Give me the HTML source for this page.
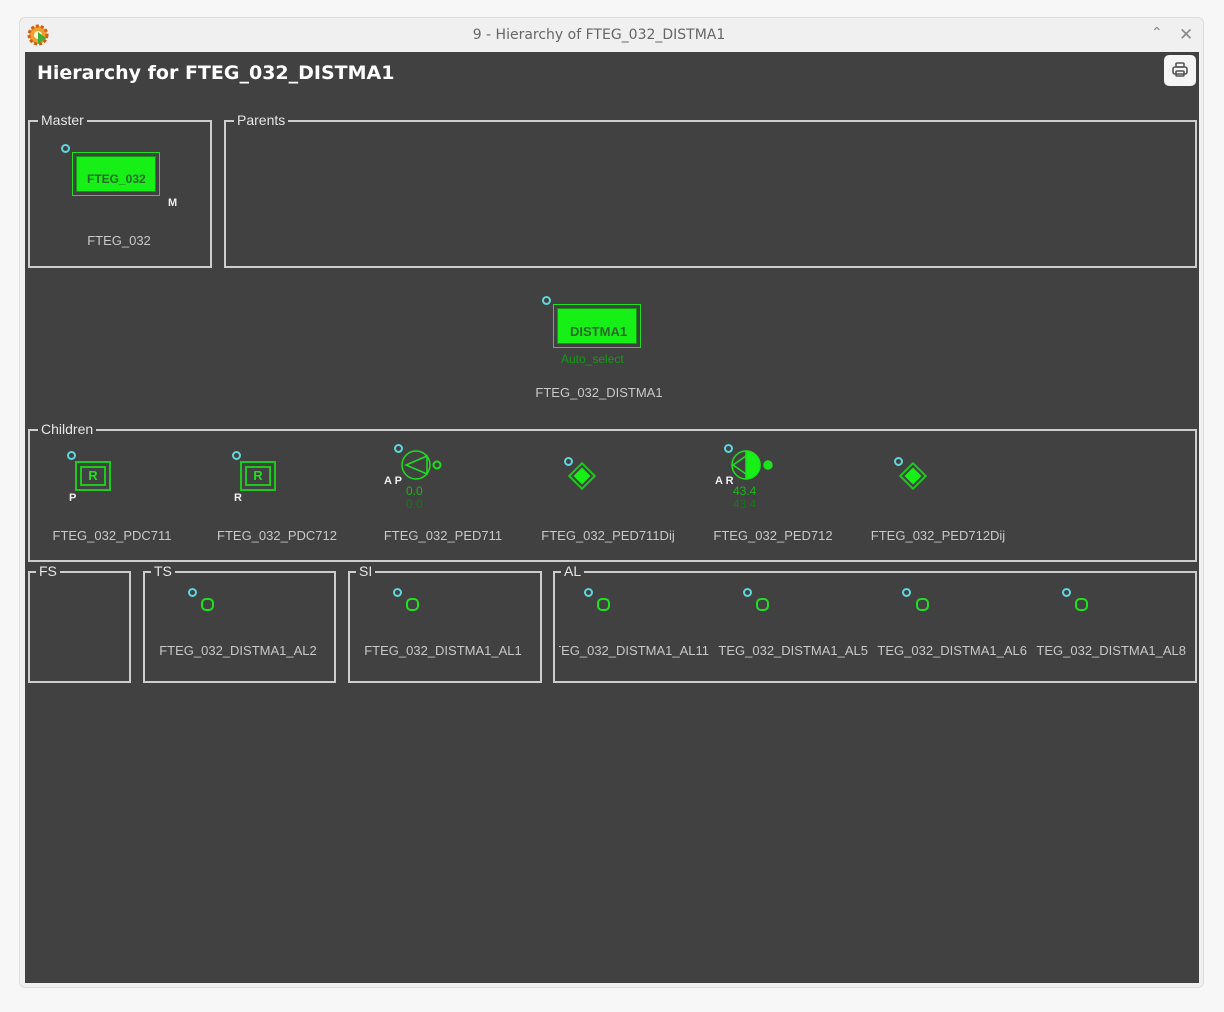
<!DOCTYPE html>
<html><head><meta charset="utf-8"><style>
*{margin:0;padding:0;box-sizing:border-box}
body{width:1224px;height:1012px;background:#f7f7f7;position:relative;overflow:hidden;font-family:"Liberation Sans","DejaVu Sans",sans-serif}
.a{position:absolute}
.win{left:19px;top:17px;width:1185px;height:971px;background:#f0f0f0;border:1px solid #ddd;border-radius:6px}
.dark{left:25px;top:52px;width:1174px;height:931px;background:#414141}
.box{position:absolute;border:2px solid #cdcdcd}
.lg{position:absolute;top:-10px;left:8px;background:#414141;color:#e6e6e6;font-size:14px;line-height:16px;padding:0 3px}
.lbl{position:absolute;color:#c8c8c8;font-size:13px;width:160px;text-align:center;white-space:nowrap;overflow:hidden}
.o{position:absolute;width:9px;height:9px;border:2.5px solid #5fd7dc;border-radius:50%}
.g{position:absolute;width:13px;height:13px;border:2px solid #1ee01e;border-radius:5px}
.wl{position:absolute;color:#eee;font-size:11px;font-weight:bold}
.num{position:absolute;color:#18b818;font-size:12px;line-height:13px}
</style></head><body>
<div class="a win"></div>
<svg class="a" style="left:26px;top:23px" width="24" height="24" viewBox="0 0 24 24"><circle cx="12" cy="12" r="9" fill="#f0a030" stroke="#d06010" stroke-width="3" stroke-dasharray="3 2"/><circle cx="12" cy="12" r="4" fill="#fff3d0"/><path d="M12 9 L20 15 L12 21Z" fill="#3cae3c"/></svg>
<div class="a" style="left:0;top:27px;width:1198px;text-align:center;font-size:14px;color:#666;font-family:'DejaVu Sans',sans-serif">9 - Hierarchy of FTEG_032_DISTMA1</div>
<div class="a" style="left:1151px;top:24px;font-size:14px;color:#888">&#8963;</div>
<div class="a" style="left:1179px;top:25px;font-size:17px;color:#888;font-weight:bold">&#10005;</div>
<div class="a dark"></div>
<div class="a" style="left:37px;top:62px;color:#fff;font-size:19px;font-weight:bold;font-family:'DejaVu Sans',sans-serif">Hierarchy for FTEG_032_DISTMA1</div>
<div class="a" style="left:1164px;top:55px;width:32px;height:31px;background:#f5f5f5;border-radius:5px"></div>
<svg class="a" style="left:1171px;top:61px" width="18" height="18" viewBox="0 0 18 18" fill="none" stroke="#555" stroke-width="1.6"><rect x="5" y="2" width="8" height="4" rx="1"/><rect x="2" y="6" width="14" height="7" rx="2"/><rect x="5" y="10" width="8" height="5" rx="1"/></svg>

<div class="box" style="left:28px;top:120px;width:184px;height:148px"><span class="lg">Master</span></div>
<div class="box" style="left:224px;top:120px;width:973px;height:148px"><span class="lg">Parents</span></div>
<div class="o" style="left:61px;top:144px"></div>
<div class="a" style="left:72px;top:152px;width:88px;height:44px;border:1px solid #1ee01e"></div>
<div class="a" style="left:76px;top:156px;width:80px;height:36px;background:#17f017;border:1px solid #129a12;color:#2a6a2a;font-size:12px;font-weight:bold;padding:15px 0 0 10px">FTEG_032</div>
<div class="wl" style="left:168px;top:197px">M</div>
<div class="lbl" style="left:39px;top:233px">FTEG_032</div>

<div class="o" style="left:542px;top:296px"></div>
<div class="a" style="left:553px;top:304px;width:88px;height:44px;border:1px solid #1ee01e"></div>
<div class="a" style="left:557px;top:308px;width:80px;height:36px;background:#17f017;border:1px solid #129a12;color:#2a6a2a;font-size:13px;font-weight:bold;padding:15px 0 0 12px">DISTMA1</div>
<div class="a" style="left:561px;top:352px;color:#119c11;font-size:12px">Auto_select</div>
<div class="lbl" style="left:519px;top:385px">FTEG_032_DISTMA1</div>

<div class="box" style="left:28px;top:429px;width:1169px;height:133px"><span class="lg">Children</span></div>
<div class="o" style="left:67px;top:451px"></div>
<div class="a" style="left:75px;top:461px;width:36px;height:30px;border:2px solid #1ec81e"></div>
<div class="a" style="left:80px;top:466px;width:26px;height:20px;border:2px solid #1ec81e;color:#1ee01e;font-size:13px;font-weight:bold;text-align:center;line-height:16px">R</div>
<div class="wl" style="left:69px;top:492px">P</div>
<div class="lbl" style="left:32px;top:528px">FTEG_032_PDC711</div>
<div class="o" style="left:232px;top:451px"></div>
<div class="a" style="left:240px;top:461px;width:36px;height:30px;border:2px solid #1ec81e"></div>
<div class="a" style="left:245px;top:466px;width:26px;height:20px;border:2px solid #1ec81e;color:#1ee01e;font-size:13px;font-weight:bold;text-align:center;line-height:16px">R</div>
<div class="wl" style="left:234px;top:492px">R</div>
<div class="lbl" style="left:197px;top:528px">FTEG_032_PDC712</div>
<div class="o" style="left:394px;top:444px"></div>
<svg class="a" style="left:400px;top:450px" width="45" height="32" viewBox="0 0 45 32" fill="none" stroke="#1ee01e" stroke-width="1.5"><circle cx="16" cy="15" r="14"/><path d="M27 6 L6 15 L27 24 Z"/><circle cx="37" cy="15" r="3.5" stroke-width="2"/></svg>
<div class="wl" style="left:384px;top:475px">A P</div>
<div class="num" style="left:406px;top:485px">0.0</div>
<div class="num" style="left:406px;top:498px;color:#107a10">0.0</div>
<div class="lbl" style="left:363px;top:528px">FTEG_032_PED711</div>
<div class="o" style="left:564px;top:457px"></div>
<div class="a" style="left:572px;top:466px;width:20px;height:20px;border:2px solid #1ec81e;transform:rotate(45deg);padding:2px"><div style="width:100%;height:100%;background:#17f017"></div></div>
<div class="lbl" style="left:528px;top:528px">FTEG_032_PED711Dij</div>
<div class="o" style="left:724px;top:444px"></div>
<svg class="a" style="left:730px;top:450px" width="45" height="32" viewBox="0 0 45 32" fill="none" stroke="#1ee01e" stroke-width="1.5"><circle cx="16" cy="15" r="14"/><path d="M16 1 A14 14 0 0 1 16 29 Z" fill="#17f017"/><path d="M16 6 L3 15 L16 24"/><circle cx="38" cy="15" r="4" fill="#1ee01e"/></svg>
<div class="wl" style="left:715px;top:475px">A R</div>
<div class="num" style="left:733px;top:485px">43.4</div>
<div class="num" style="left:733px;top:498px;color:#107a10">43.4</div>
<div class="lbl" style="left:693px;top:528px">FTEG_032_PED712</div>
<div class="o" style="left:894px;top:457px"></div>
<div class="a" style="left:903px;top:466px;width:20px;height:20px;border:2px solid #1ec81e;transform:rotate(45deg);padding:2px"><div style="width:100%;height:100%;background:#17f017"></div></div>
<div class="lbl" style="left:858px;top:528px">FTEG_032_PED712Dij</div>

<div class="box" style="left:28px;top:571px;width:103px;height:112px"><span class="lg" style="left:6px">FS</span></div>
<div class="box" style="left:143px;top:571px;width:193px;height:112px"><span class="lg" style="left:6px">TS</span></div>
<div class="box" style="left:348px;top:571px;width:194px;height:112px"><span class="lg" style="left:6px">SI</span></div>
<div class="box" style="left:553px;top:571px;width:644px;height:112px"><span class="lg" style="left:6px">AL</span></div>

<div class="o" style="left:188px;top:588px"></div><div class="g" style="left:201px;top:598px"></div>
<div class="lbl" style="left:158px;top:643px">FTEG_032_DISTMA1_AL2</div>
<div class="o" style="left:393px;top:588px"></div><div class="g" style="left:406px;top:598px"></div>
<div class="lbl" style="left:363px;top:643px">FTEG_032_DISTMA1_AL1</div>

<div class="o" style="left:584px;top:588px"></div><div class="g" style="left:597px;top:598px"></div>
<div class="lbl" style="left:559px;top:643px;width:150px;text-align:right;direction:rtl"><span style="direction:ltr;unicode-bidi:embed">FTEG_032_DISTMA1_AL11</span></div>
<div class="o" style="left:743px;top:588px"></div><div class="g" style="left:756px;top:598px"></div>
<div class="lbl" style="left:718px;top:643px;width:150px;direction:rtl"><span style="direction:ltr;unicode-bidi:embed">FTEG_032_DISTMA1_AL5</span></div>
<div class="o" style="left:902px;top:588px"></div><div class="g" style="left:916px;top:598px"></div>
<div class="lbl" style="left:877px;top:643px;width:150px;direction:rtl"><span style="direction:ltr;unicode-bidi:embed">FTEG_032_DISTMA1_AL6</span></div>
<div class="o" style="left:1062px;top:588px"></div><div class="g" style="left:1075px;top:598px"></div>
<div class="lbl" style="left:1036px;top:643px;width:150px;direction:rtl"><span style="direction:ltr;unicode-bidi:embed">FTEG_032_DISTMA1_AL8</span></div>
</body></html>
